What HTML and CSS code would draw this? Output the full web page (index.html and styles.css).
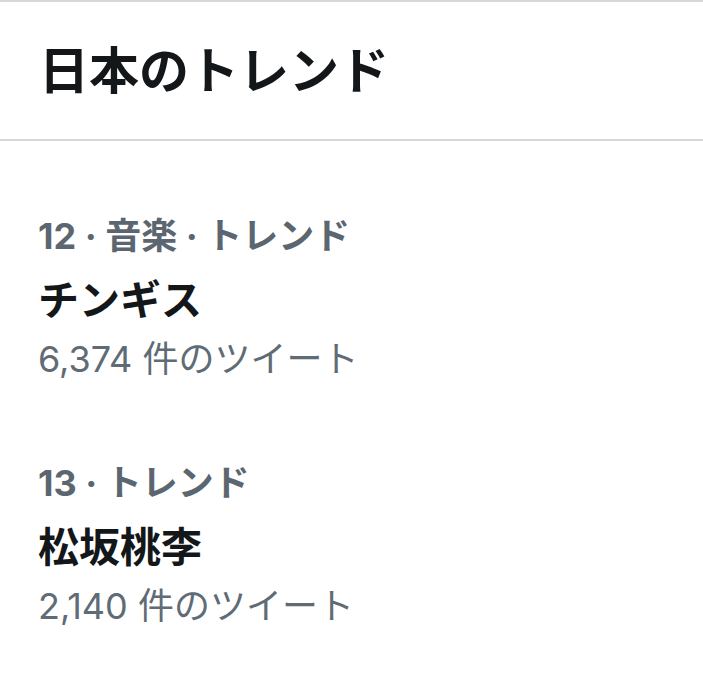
FILE: index.html
```html
<!DOCTYPE html>
<html lang="ja">
<head>
<meta charset="utf-8">
<link rel="stylesheet" href="styles.css">
</head>
<body>
<header class="header">
  <h1 class="title">日本のトレンド</h1>
</header>
<main class="list">
  <section class="trend">
    <div class="meta">12 · 音楽 · トレンド</div>
    <div class="name">チンギス</div>
    <div class="count">6,374 件のツイート</div>
  </section>
  <section class="trend">
    <div class="meta">13 · トレンド</div>
    <div class="name">松坂桃李</div>
    <div class="count">2,140 件のツイート</div>
  </section>
</main>
</body>
</html>
```
FILE: styles.css
```css
html, body {
  margin: 0;
  padding: 0;
  background: #ffffff;
}
body {
  font-family: "Inter", "Noto Sans CJK JP", sans-serif;
  width: 703px;
  height: 691px;
  overflow: hidden;
}
.header {
  border-top: 2px solid #d6d8da;
  border-bottom: 2px solid #d6d8da;
  display: flex;
  align-items: center;
  padding-left: 39px;
  box-sizing: border-box;
  height: 141px;
}
.title {
  margin: 0;
  font-size: 50px;
  font-weight: 700;
  color: #14171a;
  line-height: 1;
}
.list {
  padding: 65px 0 0 38px;
  display: flex;
  flex-direction: column;
  gap: 69px;
}
.trend {
  display: flex;
  flex-direction: column;
}
.meta {
  font-size: 36px;
  font-weight: 700;
  color: #5b6670;
  line-height: 60px;
}
.name {
  font-size: 41px;
  font-weight: 700;
  color: #14171a;
  line-height: 68px;
}
.count {
  font-size: 36px;
  font-weight: 400;
  color: #5f6b75;
  line-height: 50px;
}
```
